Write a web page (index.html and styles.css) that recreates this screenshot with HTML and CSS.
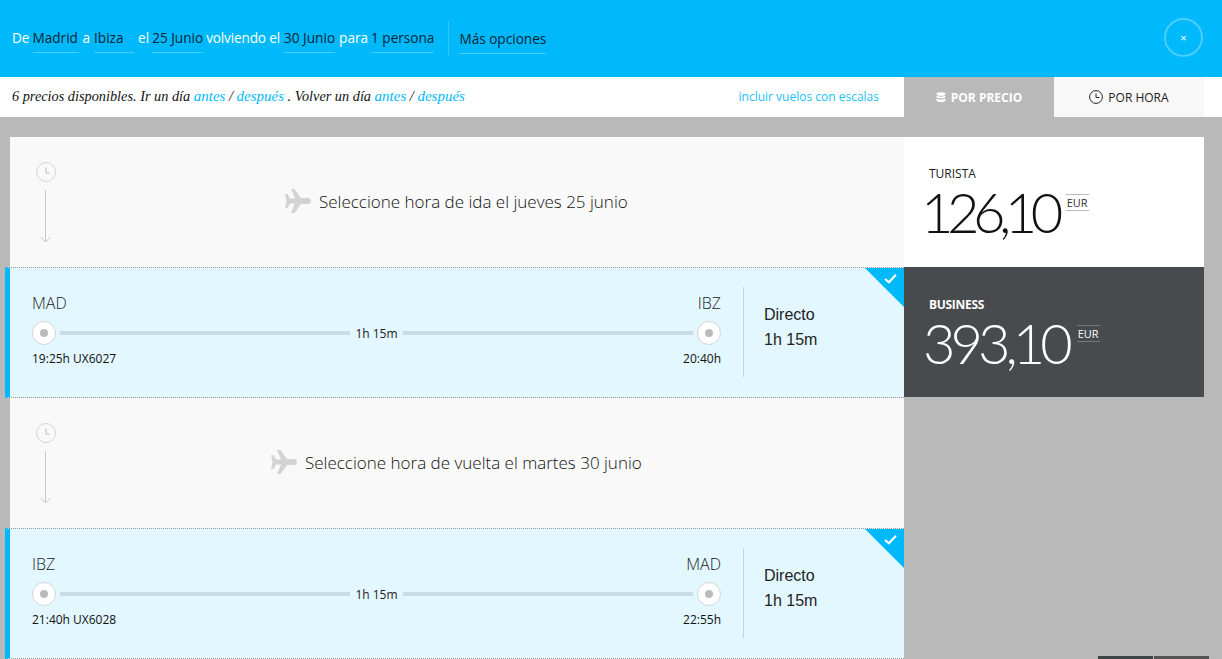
FILE: index.html
```html
<!DOCTYPE html>
<html lang="es">
<head>
<meta charset="utf-8">
<title>Vuelos</title>
<link rel="stylesheet" href="styles.css">
</head>
<body>
<header class="search">
  <div class="sentence">
    <span class="tight">De</span><span class="field f-madrid">Madrid</span><span>a</span><span class="field f-ibiza">Ibiza</span><span class="tight">el</span><span class="field tight">25 Junio</span><span class="narrow">volviendo el</span><span class="field">30 Junio</span><span class="tight">para</span><span class="field">1 persona</span>
  </div>
  <div class="more"><span class="field">Más opciones</span></div>
  <button class="close"><span>×</span></button>
</header>
<nav class="subbar">
  <p class="avail">6 precios disponibles. Ir un día <a>antes</a> / <a>después</a> . Volver un día <a>antes</a> / <a>después</a></p>
  <a class="stops">incluir vuelos con escalas</a>
  <div class="tab tab-on">
    <svg class="ico" viewBox="0 0 10 11" width="10" height="11"><ellipse cx="5" cy="2" rx="4.5" ry="1.8" fill="#fff"/><path d="M.5 3.6C1.5 5 8.500 5 9.500 3.600V5.200C8.500 6.800 1.500 6.800.5 5.200ZM.5 6.600C1.500 8 8.500 8 9.500 6.600V8.800C8.500 10.600 1.500 10.600.5 8.800Z" fill="#fff"/></svg>
    POR PRECIO
  </div>
  <div class="tab tab-off">
    <svg class="ico" viewBox="0 0 14 14" width="14" height="14"><circle cx="7" cy="7" r="6.400" fill="none" stroke="#222" stroke-width="1"/><path d="M7 3.500V7.500H10.500" fill="none" stroke="#222" stroke-width="1"/></svg>
    POR HORA
  </div>
</nav>
<main class="board">
  <section class="flights">
    <div class="prompt">
      <div class="timeline">
        <svg viewBox="0 0 22 82" width="22" height="82"><circle cx="11" cy="11" r="9.500" fill="none" stroke="#d4d4d4"/><path d="M11 6.500V12H14.500" fill="none" stroke="#bbb"/><path d="M10.500 29V81M5.500 76L10.500 81L15.500 76" fill="none" stroke="#c8c8c8"/></svg>
      </div>
      <div class="prompt-text prompt-out">
        <svg class="plane" viewBox="0 0 26 24" width="26" height="24"><path d="M0 5H2.500L5 9.500H10L6 0H9.500L16 9H23C25 9 26 10.500 26 12C26 13.500 25 15 23 15H16L9.500 24H6L10 14.500H5L2.500 19H0L1.500 12Z" fill="#d3d3d3"/></svg>
        Seleccione hora de ida el jueves 25 junio
      </div>
    </div>
    <div class="leg">
      <div class="route">
        <div class="codes"><span>MAD</span><span>IBZ</span></div>
        <div class="track"><i class="node"></i><i class="bar"></i><span class="dur">1h 15m</span><i class="bar"></i><i class="node"></i></div>
        <div class="times"><span>19:25h UX6027</span><span>20:40h</span></div>
      </div>
      <div class="info"><span>Directo</span><span>1h 15m</span></div>
      <svg class="tick" viewBox="0 0 12 10" width="13" height="11"><path d="M1 5.500L4.500 8.500L11 1.500" fill="none" stroke="#fff" stroke-width="2"/></svg>
    </div>
    <div class="prompt">
      <div class="timeline">
        <svg viewBox="0 0 22 82" width="22" height="82"><circle cx="11" cy="11" r="9.500" fill="none" stroke="#d4d4d4"/><path d="M11 6.500V12H14.500" fill="none" stroke="#bbb"/><path d="M10.500 29V81M5.500 76L10.500 81L15.500 76" fill="none" stroke="#c8c8c8"/></svg>
      </div>
      <div class="prompt-text prompt-back">
        <svg class="plane" viewBox="0 0 26 24" width="26" height="24"><path d="M0 5H2.500L5 9.500H10L6 0H9.500L16 9H23C25 9 26 10.500 26 12C26 13.500 25 15 23 15H16L9.500 24H6L10 14.500H5L2.500 19H0L1.500 12Z" fill="#d3d3d3"/></svg>
        Seleccione hora de vuelta el martes 30 junio
      </div>
    </div>
    <div class="leg">
      <div class="route">
        <div class="codes"><span>IBZ</span><span>MAD</span></div>
        <div class="track"><i class="node"></i><i class="bar"></i><span class="dur">1h 15m</span><i class="bar"></i><i class="node"></i></div>
        <div class="times"><span>21:40h UX6028</span><span>22:55h</span></div>
      </div>
      <div class="info"><span>Directo</span><span>1h 15m</span></div>
      <svg class="tick" viewBox="0 0 12 10" width="13" height="11"><path d="M1 5.500L4.500 8.500L11 1.500" fill="none" stroke="#fff" stroke-width="2"/></svg>
    </div>
  </section>
  <aside class="prices">
    <div class="price">
      <div class="cabin">TURISTA</div>
      <div class="amount"><span class="num">126,10</span><span class="cur">EUR</span></div>
    </div>
    <div class="price price-dark">
      <div class="cabin">BUSINESS</div>
      <div class="amount"><span class="num">393,10</span><span class="cur">EUR</span></div>
    </div>
  </aside>
</main>
<div class="corner"><i class="c1"></i><i class="c2"></i></div>
</body>
</html>
```
FILE: styles.css
```css
* { box-sizing: border-box; }
html, body { margin: 0; height: 659px; overflow: hidden; }
body { background: #b9b9b9; font-family: "Open Sans", "Liberation Sans", sans-serif; position: relative; color: #111; }

.search { height: 77px; background: #00b9fb; display: flex; align-items: flex-start; padding: 21px 0 0 12px; position: relative; color: #fff; font-size: 13.6px; }
.sentence { display: flex; gap: 4px; height: 35px; }
.sentence > span { line-height: 33px; height: 32px; white-space: nowrap; }
.sentence > .tight { margin-right: -1px; }
.sentence > .narrow { letter-spacing: -.15px; }
.field { color: #062536; border-bottom: 1px solid #4ccdfc; display: inline-block; }
.f-madrid { min-width: 46px; }
.f-ibiza { width: 40px; }
.more { border-left: 1px solid #33c6fb; margin-left: 14px; padding-left: 10px; height: 35px; }
.more .field { line-height: 35px; height: 33px; }
.close { position: absolute; left: 1164px; top: 18px; width: 39px; height: 39px; border: 2px solid #4ccdfc; border-radius: 50%; background: none; color: #fff; padding: 0; font: 11px/34px "Open Sans", sans-serif; }

.subbar { height: 40px; background: #fff; display: flex; align-items: stretch; padding-right: 18px; }
.avail { margin: 0 0 0 12px; flex: 1; font: italic 14.3px/39px "Liberation Serif", Georgia, serif; color: #111; white-space: nowrap; }
.avail a { color: #00b9fb; font-size: 15px; }
.stops { color: #19bffb; font-size: 12px; line-height: 40px; margin-right: 25px; }
.tab { width: 150px; display: flex; align-items: center; justify-content: center; gap: 5px; font-size: 12px; }
.tab-on { background: #b9b9b9; color: #fff; font-weight: 700; }
.tab-off { background: #f8f8f8; color: #222; }

.board { display: flex; align-items: flex-start; padding: 20px 18px 0 10px; }
.flights { width: 894px; }
.prompt { height: 130px; background: #f9f9f9; display: flex; position: relative; }
.timeline { width: 25px; margin-left: 25px; padding-top: 24px; }
.timeline svg { display: block; }
.prompt-text { position: absolute; top: 0; bottom: 2px; display: flex; align-items: center; gap: 8px; font-size: 17px; font-weight: 300; color: #111; white-space: nowrap; }
.prompt-out { left: 275px; }
.prompt-back { left: 261px; }

.leg { height: 131px; margin-left: -5px; width: 899px; background: #e2f7ff; border-left: 5px solid #00b9fb; border-top: 1px dotted #999; border-bottom: 1px dotted #999; display: flex; position: relative; }
.leg::after { content: ""; position: absolute; right: 0; top: 0; border-style: solid; border-width: 0 39px 39px 0; border-color: transparent #00b9fb transparent transparent; }
.tick { position: absolute; right: 7px; top: 5px; z-index: 1; }
.route { width: 689px; margin-left: 22px; padding-top: 24px; }
.codes, .times { display: flex; justify-content: space-between; }
.codes { font-size: 16px; font-weight: 300; line-height: 22px; color: #222; }
.track { display: flex; align-items: center; height: 24px; margin-top: 7px; gap: 4px; }
.node { width: 24px; height: 24px; border-radius: 50%; background: #fff; border: 1px solid #d4d4d4; position: relative; flex: none; }
.node::after { content: ""; position: absolute; left: 7px; top: 7px; width: 8px; height: 8px; border-radius: 50%; background: #bbb; }
.bar { flex: 1; height: 4px; background: #c9dde5; }
.dur { font-size: 12px; margin: 0 1.500px; color: #222; }
.times { font-size: 12px; line-height: 18px; margin-top: 5px; color: #111; }
.info { flex: 1; margin: 19px 0 0 22px; border-left: 1px solid #c8d4d9; padding: 18px 0 0 20px; display: flex; flex-direction: column; gap: 6px; font: 400 16px/19px "Liberation Sans", sans-serif; color: #222; height: 90px; }

.prices { width: 300px; }
.price { height: 130px; background: #fff; padding: 30px 0 0 25px; }
.price-dark { background: #474b4e; color: #fff; padding-top: 31px; }
.cabin { font-size: 12px; line-height: 14px; color: #222; }
.price-dark .cabin { color: #fff; font-weight: 700; letter-spacing: -.3px; }
.amount { display: flex; align-items: flex-start; margin-left: -8px; }
.price-dark .amount { margin-left: -6px; }
.num { font: 300 56px/62px "Lato", "Open Sans", sans-serif; letter-spacing: -6.500px; color: #111; }
.price-dark .num { color: #fff; letter-spacing: -5px; }
.cur { font-size: 11px; line-height: 15px; margin: 13px 0 0 9px; border-top: 1px solid #bbb; border-bottom: 1px solid #bbb; height: 17px; padding: 0 1px; color: #333; }
.price-dark .cur { color: #fff; border-color: #777; }

.corner { position: absolute; left: 1098px; top: 656px; display: flex; gap: 1px; }
.corner i { width: 55px; height: 3px; display: block; }
.c1 { background: #3f4447; }
.c2 { background: #555; }
```
